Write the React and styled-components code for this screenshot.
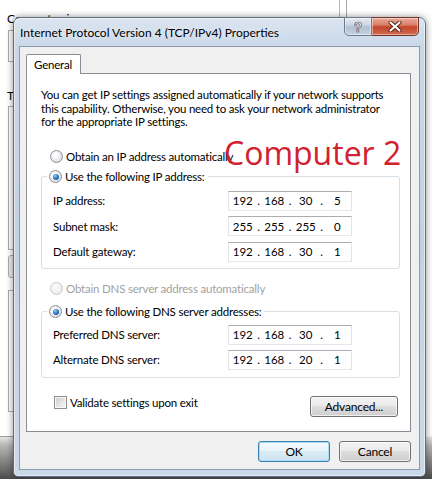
import React from 'react';
import styled, { createGlobalStyle } from 'styled-components';

const GlobalStyle = createGlobalStyle`
  html, body {
    margin: 0;
    padding: 0;
    background: #fff;
  }
  body {
    font-family: Lato, "Open Sans", sans-serif;
  }
`;

const Desktop = styled.div`
  position: relative;
  width: 432px;
  height: 479px;
  overflow: hidden;
  padding: 17px 0 0 13px;
  box-sizing: border-box;
  background: linear-gradient(
    to bottom,
    #ffffff 0,
    #ffffff 436px,
    #e4e4e4 437px,
    #b4b4b4 446px,
    #6a6a6a 470px,
    #4a4a4a 479px
  );
`;

/* the window that sits behind the dialog */
const BackWindow = styled.div`
  position: absolute;
  left: 0;
  top: 0;
  width: 346px;
  height: 436px;
  background: #fff;
  border-right: 1px solid #a8a8a8;
  border-bottom: 1px solid #9c9c9c;
  font-size: 12px;
  color: #000;

  &::after {
    content: '';
    position: absolute;
    right: 6px;
    top: 0;
    height: 20px;
    border-right: 1px solid #b8b8b8;
  }
`;

const BackLabel = styled.div`
  position: absolute;
  left: 7px;
  top: ${p => p.$top}px;
`;

const BackBox = styled.div`
  position: absolute;
  left: 8px;
  top: ${p => p.$top}px;
  width: 300px;
  height: ${p => p.$h}px;
  border: 1px solid #adadad;
  border-radius: ${p => (p.$button ? '3px' : '0')};
  background: ${p => (p.$button ? '#ececec' : '#fff')};
`;

const Dialog = styled.div`
  position: relative;
  width: 413px;
  height: 460px;
  box-sizing: border-box;
  border: 1px solid #5d6e84;
  border-radius: 7px 7px 5px 5px;
  background: linear-gradient(
    to bottom,
    #dbe5f1 0,
    #c9d7e7 30px,
    #c3d2e3 50%,
    #cbd8e7 100%
  );
  box-shadow: 0 0 7px rgba(0, 0, 0, 0.45), inset 0 0 0 1px rgba(255, 255, 255, 0.55);
  padding: 0 5px 6px 5px;
  display: flex;
  flex-direction: column;
`;

const TitleBar = styled.div`
  height: 28px;
  display: flex;
  align-items: center;
  padding-left: 1px;
`;

const TitleText = styled.div`
  font-size: 12px;
  color: #000;
  white-space: nowrap;
  text-shadow: 0 0 6px rgba(255, 255, 255, 0.9);
`;

const CaptionButtons = styled.div`
  margin-left: auto;
  margin-right: 1px;
  align-self: flex-start;
  margin-top: -1px;
  display: flex;
`;

const CaptionButton = styled.div`
  width: ${p => (p.$close ? 47 : 28)}px;
  height: 19px;
  box-sizing: border-box;
  border: 1px solid ${p => (p.$close ? '#6e3528' : '#6b7a8e')};
  border-left-width: ${p => (p.$close ? 0 : 1)}px;
  border-radius: ${p => (p.$close ? '0 0 5px 0' : '0 0 0 5px')};
  background: ${p =>
    p.$close
      ? 'linear-gradient(to bottom, #e9a99a 0, #d98068 40%, #c4462c 52%, #cf6a4f 100%)'
      : 'linear-gradient(to bottom, #e4eaf1 0, #cbd5e1 42%, #b2c0d1 52%, #c6d2e0 100%)'};
  box-shadow: inset 0 0 0 1px rgba(255, 255, 255, 0.45);
  display: flex;
  align-items: center;
  justify-content: center;
`;

const HelpGlyph = styled.span`
  font-family: "Liberation Sans", sans-serif;
  font-weight: bold;
  font-size: 14px;
  color: #f4f7fa;
  -webkit-text-stroke: 0.6px #3e4e63;
  line-height: 1;
`;

const Client = styled.div`
  flex: 1;
  border: 1px solid #8a9bb0;
  background: #f0f0f0;
  display: flex;
  flex-direction: column;
  padding: 7px 8px 7px 6px;
  font-size: 11.5px;
  letter-spacing: -0.2px;
  color: #000;
  white-space: nowrap;
`;

const TabStrip = styled.div`
  display: flex;
  position: relative;
  z-index: 1;
  margin-bottom: -1px;
`;

const Tab = styled.div`
  height: 20px;
  box-sizing: border-box;
  padding: 2px 8px 0 7px;
  background: #fff;
  border: 1px solid #898c95;
  border-bottom: none;
  border-radius: 2px 2px 0 0;
  line-height: 16px;
`;

const TabPanel = styled.div`
  position: relative;
  height: 359px;
  box-sizing: border-box;
  border: 1px solid #898c95;
  background: #fff;
  padding: 14px 10px 0 14px;
  display: flex;
  flex-direction: column;
`;

const Intro = styled.p`
  margin: 0;
  line-height: 13.5px;
`;

const Stamp = styled.div`
  position: absolute;
  left: 197px;
  top: 63px;
  font-family: "Open Sans", sans-serif;
  font-size: 32px;
  line-height: 1;
  letter-spacing: 0;
  color: #d2202e;
`;

const RadioRow = styled.label`
  display: flex;
  align-items: center;
  gap: 3px;
  height: 14px;
  margin: ${p => p.$margin || '0'};
  padding-left: ${p => p.$indent || 0}px;
  color: ${p => (p.$disabled ? '#a2a2a2' : '#000')};
`;

const RadioDot = styled.span`
  position: relative;
  flex: none;
  width: 11px;
  height: 11px;
  border-radius: 50%;
  border: 1px solid ${p => (p.$disabled ? '#c8c8c8' : '#8c8e91')};
  background: ${p =>
    p.$disabled
      ? 'radial-gradient(circle at 40% 35%, #fcfcfc, #e8e8e8)'
      : 'radial-gradient(circle at 40% 35%, #ffffff 10%, #d5d9de 90%)'};

  &::after {
    content: '';
    display: ${p => (p.$checked ? 'block' : 'none')};
    position: absolute;
    inset: 2.5px;
    border-radius: 50%;
    background: radial-gradient(circle at 38% 32%, #8fd0f6 0, #2d7dc7 45%, #0c3e78 100%);
  }
`;

const Group = styled.fieldset`
  margin: ${p => p.$margin};
  padding: ${p => p.$padding};
  min-inline-size: 0;
  border: 1px solid #d5dfe5;
  border-radius: 3px;
  display: flex;
  flex-direction: column;
  gap: ${p => p.$gap}px;
`;

const Legend = styled.legend`
  margin-left: 5px;
  padding: 0 3px 0 2px;
`;

const FieldRow = styled.div`
  display: grid;
  grid-template-columns: 175px 124px;
  align-items: center;
  height: 20px;
  padding-left: 11px;
`;

const IpBox = styled.div`
  height: 20px;
  box-sizing: border-box;
  border: 1px solid #e0e3ea;
  border-top-color: #abadb3;
  border-left-color: #e2e3ea;
  border-bottom-color: #e3e9ef;
  background: #fff;
  display: flex;
  align-items: center;
  letter-spacing: 0;
`;

const Octet = styled.span`
  flex: 1;
  text-align: center;
`;

const Dot = styled.span`
  width: 4px;
  text-align: center;
`;

const BottomRow = styled.div`
  margin-top: 18px;
  display: flex;
  justify-content: space-between;
  align-items: flex-start;
  padding-right: 2px;
`;

const CheckRow = styled.label`
  display: flex;
  align-items: center;
  gap: 3px;
  margin-left: 13px;
  height: 13px;
`;

const CheckBox = styled.span`
  width: 13px;
  height: 13px;
  box-sizing: border-box;
  border: 1px solid #8e8f8f;
  box-shadow: inset 0 0 0 1px #f6f6f6;
  background: linear-gradient(135deg, #c9ccd1 0, #e6e7e9 60%, #f7f7f7 100%);
`;

const Button = styled.div`
  width: ${p => p.$w || 72}px;
  height: ${p => p.$h || 21}px;
  box-sizing: border-box;
  border: 1px solid ${p => (p.$focus ? '#3c7fb1' : '#707070')};
  border-radius: 3px;
  background: ${p =>
    p.$focus
      ? 'linear-gradient(to bottom, #f4fafd 0, #e9f4fa 45%, #d9ebf5 50%, #cde3ef 100%)'
      : 'linear-gradient(to bottom, #f2f2f2 0, #ebebeb 45%, #dddddd 50%, #cfcfcf 100%)'};
  box-shadow: inset 0 0 0 1px ${p => (p.$focus ? '#a9dcf5' : 'rgba(255, 255, 255, 0.7)')};
  display: flex;
  align-items: center;
  justify-content: center;
  font-size: 12px;
`;

const ButtonRow = styled.div`
  margin-top: 9px;
  display: flex;
  justify-content: flex-end;
  gap: 9px;
`;

function CloseGlyph() {
  return (
    <svg width="14" height="11" viewBox="0 0 14 11">
      <path d="M2.5 1.5 L11.5 9.5 M11.5 1.5 L2.5 9.5" stroke="#5a1f14" strokeWidth="4" strokeLinecap="round" />
      <path d="M2.5 1.5 L11.5 9.5 M11.5 1.5 L2.5 9.5" stroke="#ffffff" strokeWidth="2.2" strokeLinecap="round" />
    </svg>
  );
}

function IpField({ value }) {
  const parts = value.split('.');
  return (
    <IpBox>
      {parts.map((part, i) => (
        <React.Fragment key={i}>
          {i > 0 && <Dot>.</Dot>}
          <Octet>{part}</Octet>
        </React.Fragment>
      ))}
    </IpBox>
  );
}

const ipRows = [
  ['IP address:', '192.168.30.5'],
  ['Subnet mask:', '255.255.255.0'],
  ['Default gateway:', '192.168.30.1'],
];

const dnsRows = [
  ['Preferred DNS server:', '192.168.30.1'],
  ['Alternate DNS server:', '192.168.20.1'],
];

export default function App() {
  return (
    <>
      <GlobalStyle />
      <Desktop>
        <BackWindow>
          <BackLabel $top={11}>Connect using:</BackLabel>
          <BackBox $top={30} $h={30} />
          <BackLabel $top={88}>T</BackLabel>
          <BackBox $top={106} $h={142} />
          <BackBox $top={255} $h={21} $button />
          <BackBox $top={290} $h={120} />
        </BackWindow>

        <Dialog>
          <TitleBar>
            <TitleText>Internet Protocol Version 4 (TCP/IPv4) Properties</TitleText>
            <CaptionButtons>
              <CaptionButton>
                <HelpGlyph>?</HelpGlyph>
              </CaptionButton>
              <CaptionButton $close>
                <CloseGlyph />
              </CaptionButton>
            </CaptionButtons>
          </TitleBar>

          <Client>
            <TabStrip>
              <Tab>General</Tab>
            </TabStrip>
            <TabPanel>
              <Intro>
                You can get IP settings assigned automatically if your network supports
                <br />
                this capability. Otherwise, you need to ask your network administrator
                <br />
                for the appropriate IP settings.
              </Intro>

              <RadioRow $margin="21px 0 0 0" $indent={9}>
                <RadioDot />
                Obtain an IP address automatically
              </RadioRow>

              <Group $margin="6px 0 0 0" $padding="7px 0 6px 0" $gap={5.5}>
                <Legend>
                  <RadioRow>
                    <RadioDot $checked />
                    Use the following IP address:
                  </RadioRow>
                </Legend>
                {ipRows.map(([label, ip]) => (
                  <FieldRow key={label}>
                    <span>{label}</span>
                    <IpField value={ip} />
                  </FieldRow>
                ))}
              </Group>

              <RadioRow $margin="13px 0 0 0" $indent={9} $disabled>
                <RadioDot $disabled />
                Obtain DNS server address automatically
              </RadioRow>

              <Group $margin="9px 0 0 0" $padding="6px 0 7px 0" $gap={5}>
                <Legend>
                  <RadioRow>
                    <RadioDot $checked />
                    Use the following DNS server addresses:
                  </RadioRow>
                </Legend>
                {dnsRows.map(([label, ip]) => (
                  <FieldRow key={label}>
                    <span>{label}</span>
                    <IpField value={ip} />
                  </FieldRow>
                ))}
              </Group>

              <BottomRow>
                <CheckRow>
                  <CheckBox />
                  Validate settings upon exit
                </CheckRow>
                <Button $w={88} $h={21}>Advanced...</Button>
              </BottomRow>

              <Stamp>Computer 2</Stamp>
            </TabPanel>

            <ButtonRow>
              <Button $focus>OK</Button>
              <Button>Cancel</Button>
            </ButtonRow>
          </Client>
        </Dialog>
      </Desktop>
    </>
  );
}
